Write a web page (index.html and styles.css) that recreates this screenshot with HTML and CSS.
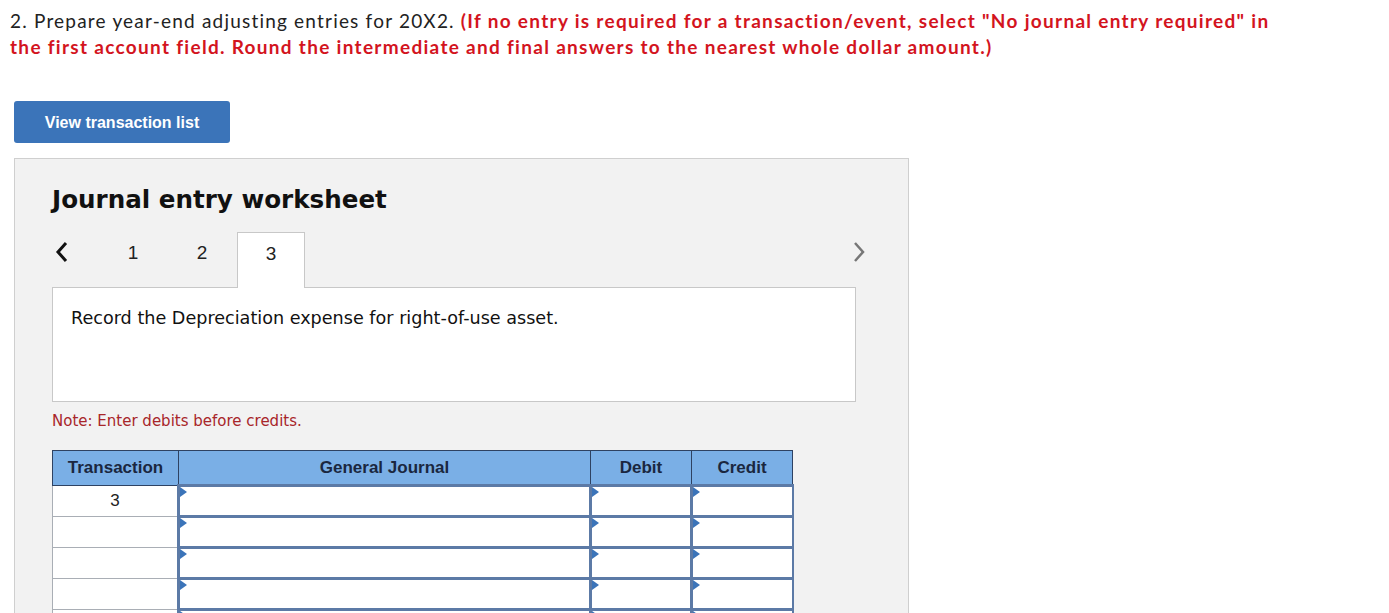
FILE: index.html
```html
<!DOCTYPE html>
<html>
<head>
<meta charset="utf-8">
<link rel="stylesheet" href="styles.css">
</head>
<body>
<p class="question">2. Prepare year-end adjusting entries for 20X2. <strong class="instr">(If no entry is required for a transaction/event, select "No journal entry required" in the first account field. Round the intermediate and final answers to the nearest whole dollar amount.)</strong></p>
<button class="btn">View transaction list</button>
<section class="panel">
  <h2 class="title">Journal entry worksheet</h2>
  <div class="tabs">
    <span class="arrow left"><svg width="14" height="22" viewBox="0 0 14 22"><path d="M11 2 L3 11 L11 20" fill="none" stroke="#111" stroke-width="3"/></svg></span>
    <span class="tab t1">1</span>
    <span class="tab t2">2</span>
    <span class="tab active">3</span>
    <span class="spacer"></span>
    <span class="arrow right"><svg width="14" height="22" viewBox="0 0 14 22"><path d="M3 2 L11 11 L3 20" fill="none" stroke="#777" stroke-width="2.5"/></svg></span>
  </div>
  <div class="desc">Record the Depreciation expense for right-of-use asset.</div>
  <p class="note">Note: Enter debits before credits.</p>
  <table class="journal">
    <thead>
      <tr><th class="c-tx">Transaction</th><th class="c-gj">General Journal</th><th class="c-dr">Debit</th><th class="c-cr">Credit</th></tr>
    </thead>
    <tbody>
      <tr><td class="tx">3</td><td class="in"><i></i></td><td class="in"><i></i></td><td class="in"><i></i></td></tr>
      <tr><td class="tx"></td><td class="in"><i></i></td><td class="in"><i></i></td><td class="in"><i></i></td></tr>
      <tr><td class="tx"></td><td class="in"><i></i></td><td class="in"><i></i></td><td class="in"><i></i></td></tr>
      <tr><td class="tx"></td><td class="in"><i></i></td><td class="in"><i></i></td><td class="in"><i></i></td></tr>
      <tr><td class="tx"></td><td class="in"><i></i></td><td class="in"><i></i></td><td class="in"><i></i></td></tr>
    </tbody>
  </table>
</section>
</body>
</html>
```
FILE: styles.css
```css
html, body { margin: 0; padding: 0; background: #fff; }
body { padding: 8px 10px 0 10px; overflow: hidden; height: 605px; }
.question {
  margin: 0;
  font-family: "Lato", "Open Sans", sans-serif;
  font-size: 19px;
  line-height: 26px;
  letter-spacing: 1.2px;
  color: #222;
  width: 1285px;
}
.instr { color: #d3141e; font-weight: 700; letter-spacing: 1.3px; }
.btn {
  display: block;
  margin: 41px 0 0 4px;
  width: 216px;
  height: 42px;
  border: 0;
  border-radius: 3px;
  background: #3b74b9;
  color: #fff;
  font-family: "Liberation Sans", Arial, sans-serif;
  font-weight: 700;
  font-size: 16px;
  padding: 2px 0 0 0;
}
.panel {
  margin: 15px 0 0 4px;
  width: 895px;
  height: 470px;
  background: #f2f2f2;
  border: 1px solid #cfcfcf;
  padding: 0 52px 0 37px;
  box-sizing: border-box;
}
.title {
  margin: 25px 0 0 0;
  font-family: "DejaVu Sans", Verdana, sans-serif;
  font-weight: 700;
  font-size: 24.6px;
  line-height: 32px;
  color: #111;
}
.tabs {
  margin-top: 16px;
  display: flex;
  align-items: stretch;
  height: 55px;
  font-family: "Liberation Sans", Arial, sans-serif;
  font-size: 19px;
  color: #222;
}
.arrow { display: flex; align-items: flex-start; padding-top: 9px; }
.arrow.left { padding-left: 3px; width: 29px; }
.arrow.right { width: 14px; margin-right: -10px; }
.tab { display: flex; align-items: flex-start; padding-top: 10px; justify-content: center; }
.tab.t1 { width: 82px; margin-left: 8px; }
.tab.t2 { width: 56px; margin-right: 7px; }
.tab.active {
  width: 68px;
  box-sizing: border-box;
  background: #fff;
  border: 1px solid #c8c8c8;
  border-bottom: 0;
  position: relative;
  z-index: 1;
  margin-bottom: -1px;
}
.spacer { flex: 1; }
.desc {
  background: #fff;
  border: 1px solid #c8c8c8;
  height: 115px;
  box-sizing: border-box;
  padding: 20px 18px;
  font-family: "DejaVu Sans", Verdana, sans-serif;
  font-size: 17.6px;
  color: #111;
}
.note {
  margin: 10px 0 0 0;
  font-family: "DejaVu Sans", Verdana, sans-serif;
  font-size: 15px;
  color: #a8262a;
  line-height: 18px;
}
.journal {
  margin-top: 20px;
  border-collapse: collapse;
  font-family: "Liberation Sans", Arial, sans-serif;
  table-layout: fixed;
  width: 736px;
}
.journal th {
  background: #7aafe6;
  border: 1px solid #2e4262;
  height: 33px;
  padding: 0;
  font-size: 17px;
  font-weight: 700;
  color: #1a2740;
}
.c-tx { width: 125px; }
.c-gj { width: 411px; }
.c-dr { width: 100px; }
.c-cr { width: 100px; }
.journal td { padding: 0; height: 31px; box-sizing: border-box; }
.journal td.tx {
  background: #fff;
  border: 1px solid #a9aeb5;
  text-align: center;
  font-size: 17px;
  color: #222;
}
.journal td.in {
  background: #fff;
  border: 3px solid #5c7aa6;
  border-right-width: 2px;
  position: relative;
}
.journal td.in i {
  position: absolute;
  left: 0;
  top: 0;
  width: 0;
  height: 0;
  border-top: 5px solid transparent;
  border-bottom: 5px solid transparent;
  border-left: 7px solid #3b74b9;
}
```
